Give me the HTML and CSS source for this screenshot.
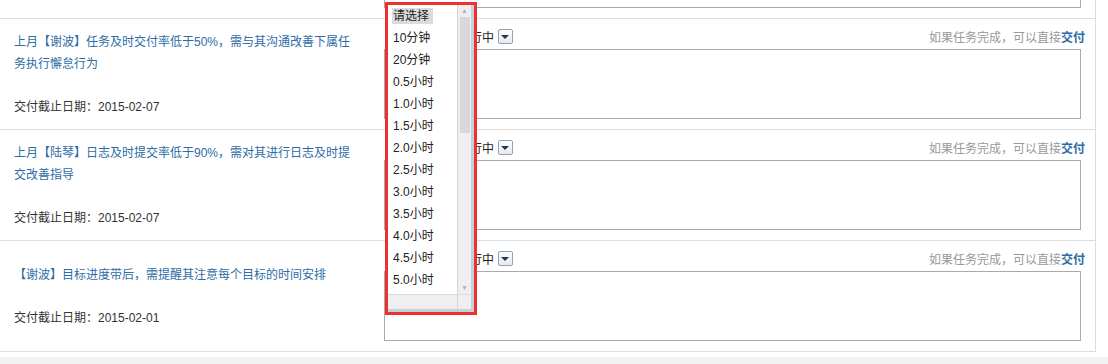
FILE: index.html
```html
<!DOCTYPE html>
<html lang="zh-CN">
<head>
    <meta charset="UTF-8">
    <title>任务交付</title>
    <link rel="stylesheet" href="styles.css">
</head>
<body>
    <div class="task-list">
        <!-- row cut off by the scroll position -->
        <div class="task-row">
            <div class="task-info">
                <a class="task-title" href="#">上月【吴敏】周报及时提交率低于80%，需与其沟通改善</a>
                <p class="task-date">交付截止日期：2015-02-07</p>
            </div>
            <div class="task-act">
                <div class="act-top">
                    <span class="select">进行中<i class="arrow"></i></span>
                    <span class="hint">如果任务完成，可以直接<a href="#">交付</a></span>
                </div>
                <textarea class="note"></textarea>
            </div>
        </div>

        <div class="task-row">
            <div class="task-info">
                <a class="task-title" href="#">上月【谢波】任务及时交付率低于50%，需与其沟通改善下属任务执行懈怠行为</a>
                <p class="task-date">交付截止日期：2015-02-07</p>
            </div>
            <div class="task-act">
                <div class="act-top">
                    <span class="select">进行中<i class="arrow"></i></span>
                    <span class="hint">如果任务完成，可以直接<a href="#">交付</a></span>
                </div>
                <textarea class="note"></textarea>
            </div>
        </div>

        <div class="task-row">
            <div class="task-info">
                <a class="task-title" href="#">上月【陆琴】日志及时提交率低于90%，需对其进行日志及时提交改善指导</a>
                <p class="task-date">交付截止日期：2015-02-07</p>
            </div>
            <div class="task-act">
                <div class="act-top">
                    <span class="select">进行中<i class="arrow"></i></span>
                    <span class="hint">如果任务完成，可以直接<a href="#">交付</a></span>
                </div>
                <textarea class="note"></textarea>
            </div>
        </div>

        <div class="task-row">
            <div class="task-info">
                <a class="task-title" href="#">【谢波】目标进度带后，需提醒其注意每个目标的时间安排</a>
                <p class="task-date">交付截止日期：2015-02-01</p>
            </div>
            <div class="task-act">
                <div class="act-top">
                    <span class="select">进行中<i class="arrow"></i></span>
                    <span class="hint">如果任务完成，可以直接<a href="#">交付</a></span>
                </div>
                <textarea class="note"></textarea>
            </div>
        </div>
    </div>
    <div class="footer"></div>

    <!-- open time dropdown -->
    <div class="dropdown">
        <div class="dd-frame">
            <div class="dd-body">
                <ul class="dd-list">
                    <li><span class="picked">请选择</span></li>
                    <li>10分钟</li>
                    <li>20分钟</li>
                    <li>0.5小时</li>
                    <li>1.0小时</li>
                    <li>1.5小时</li>
                    <li>2.0小时</li>
                    <li>2.5小时</li>
                    <li>3.0小时</li>
                    <li>3.5小时</li>
                    <li>4.0小时</li>
                    <li>4.5小时</li>
                    <li>5.0小时</li>
                </ul>
                <div class="vscroll">
                    <span class="sb-btn">&#9650;</span>
                    <span class="sb-thumb"></span>
                    <span class="sb-track"></span>
                    <span class="sb-btn">&#9660;</span>
                </div>
            </div>
            <div class="hscroll"><span class="corner"></span></div>
        </div>
    </div>
</body>
</html>
```

FILE: styles.css
```css
body {
    margin: 0;
    background-color: #fff;
    font-family: "Liberation Sans", "Noto Sans CJK SC", sans-serif;
    font-size: 12px;
    color: #333;
    overflow: hidden;
}

a {
    color: #2d6ca6;
    text-decoration: none;
}

.task-list {
    margin-top: -92px;
    width: 1095px;
    border-right: 1px solid #ddd;
}

.task-row {
    display: flex;
    height: 110px;
    border-bottom: 1px solid #ddd;
}

.task-info {
    width: 384px;
    box-sizing: border-box;
    padding-left: 14px;
    display: flex;
    flex-direction: column;
    justify-content: center;
}

.task-title {
    width: 340px;
    line-height: 22px;
}

.task-date {
    margin: 21px 0 0;
    line-height: 22px;
    color: #333;
}

.task-act {
    width: 701px;
    padding-top: 8px;
}

.act-top {
    display: flex;
    justify-content: space-between;
    align-items: center;
    height: 18px;
}

.select {
    display: inline-flex;
    align-items: center;
    gap: 4px;
    margin-left: 74px;
    color: #222;
}

.arrow {
    display: inline-block;
    width: 13px;
    height: 13px;
    border: 1px solid #8fa3b6;
    border-radius: 2px;
    background: linear-gradient(#fdfdfd, #e6ebef);
    position: relative;
}

.arrow::after {
    content: "";
    position: absolute;
    left: 2px;
    top: 5px;
    border-left: 4px solid transparent;
    border-right: 4px solid transparent;
    border-top: 4px solid #1f3550;
}

.hint {
    color: #999;
}

.hint a {
    font-weight: bold;
}

.note {
    display: block;
    margin: 4px 0 0;
    width: 697px;
    height: 70px;
    box-sizing: border-box;
    border: 1px solid #aaa;
    resize: none;
    padding: 2px;
}

.footer {
    margin-top: 5px;
    height: 20px;
    background-color: #f2f2f2;
}

/* dropdown list laid over the first select */
.dropdown {
    position: absolute;
    left: 385px;
    top: 2px;
    width: 92px;
    height: 313px;
    box-sizing: border-box;
    border: 3px solid #ee3030;
    background-color: #fff;
}

.dd-frame {
    height: 100%;
    box-sizing: border-box;
    border-right: 3px solid #c3d1db;
    border-bottom: 3px solid #c3d1db;
    display: flex;
    flex-direction: column;
}

.dd-body {
    flex: 1;
    display: flex;
    min-height: 0;
}

.dd-list {
    flex: 1;
    list-style: none;
    margin: 0;
    padding: 0 0 0 5px;
    color: #222;
    overflow: hidden;
}

.dd-list li {
    height: 22px;
    line-height: 22px;
    white-space: nowrap;
}

.picked {
    background-color: #dcdcdc;
    padding: 1px 4px 1px 1px;
    margin-left: -1px;
}

.vscroll {
    width: 13px;
    border-left: 1px solid #d4d4d4;
    background-color: #efefef;
    display: flex;
    flex-direction: column;
    align-items: center;
}

.sb-btn {
    height: 12px;
    font-size: 7px;
    line-height: 12px;
    color: #b4b4b4;
}

.sb-thumb {
    width: 10px;
    height: 116px;
    background-color: #d8d8d8;
}

.sb-track {
    flex: 1;
}

.hscroll {
    height: 14px;
    border-top: 1px solid #dcdcdc;
    background-color: #efefef;
    display: flex;
    justify-content: flex-end;
}

.corner {
    width: 13px;
    border-left: 1px solid #d4d4d4;
}
```
